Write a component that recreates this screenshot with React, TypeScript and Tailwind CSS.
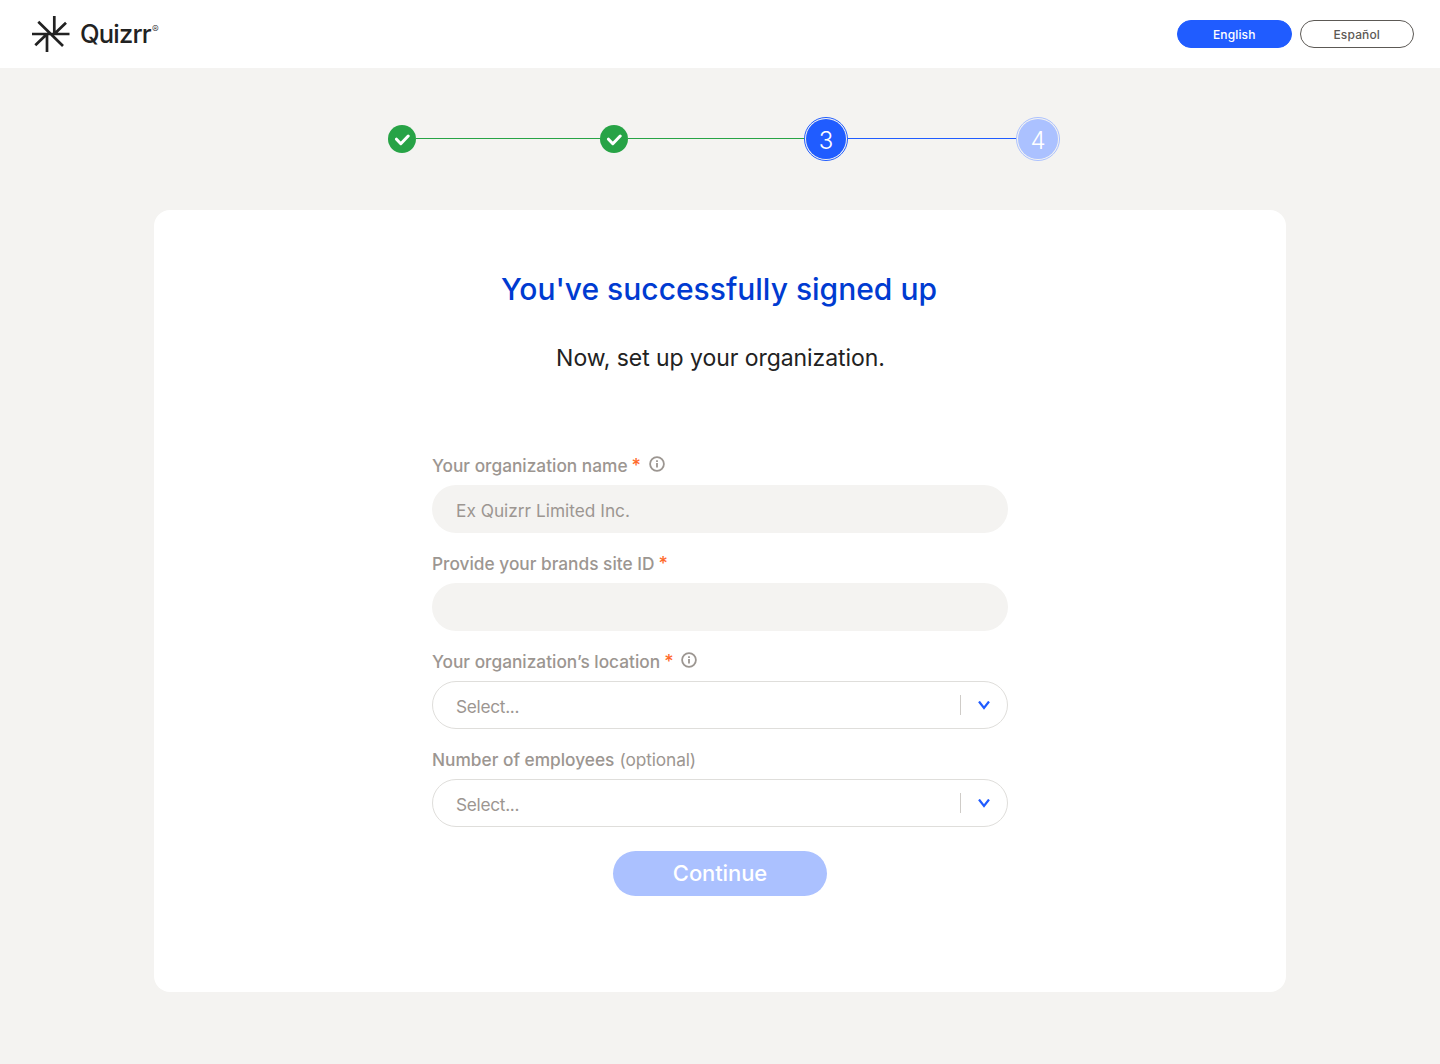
import { useState } from "react";
import clsx from "clsx";

const languages = ["English", "Español"];

function Logo() {
    return (
        <div className="flex items-center text-[#222222]">
            <svg width="38" height="36" viewBox="0 0 38 36" fill="none" stroke="currentColor" strokeWidth="2.7">
                <path d="M0 18H37.5M22.3 0V18M15 18V36M6.3 5.8L31 30M34 6.7L22.3 18M15 18L3.3 29.3" />
            </svg>
            <span className="ml-2.5 text-[25.5px] leading-9 font-medium tracking-[-0.8px]">Quizrr</span>
            <span className="ml-px mb-2.5 text-[10px] leading-none font-light">®</span>
        </div>
    );
}

function DoneStep() {
    return (
        <div className="flex size-7 items-center justify-center rounded-full bg-[#27a346]">
            <svg width="16" height="12" viewBox="0 0 16 12" fill="none" stroke="white" strokeWidth="3" strokeLinecap="round" strokeLinejoin="round" className="mt-0.5">
                <path d="M2.5 5.2L6.8 9.7L14.2 2" />
            </svg>
        </div>
    );
}

function NumberStep({ value, active }: { value: number; active?: boolean }) {
    return (
        <div className={clsx("size-11 rounded-full border p-px", active ? "border-[#205cff]" : "border-[#abc1ff]")}>
            <div className={clsx("flex size-full items-center justify-center rounded-full pt-1 text-2xl leading-none font-light text-white", active ? "bg-[#205cff]" : "bg-[#abc1ff]")}>
                {value}
            </div>
        </div>
    );
}

function InfoIcon() {
    return (
        <svg width="16" height="16" viewBox="0 0 16 16" fill="none" stroke="#9c9691" strokeWidth="1.8" className="mb-1 ml-[9px]">
            <circle cx="8" cy="8" r="6.9" />
            <path d="M8 7V11.5M8 4.3V6" />
        </svg>
    );
}

interface LabelProps {
    text: string;
    required?: boolean;
    info?: boolean;
    optional?: boolean;
}

function Label({ text, required, info, optional }: LabelProps) {
    return (
        <label className="flex h-6 items-center pt-0.5 text-[17.3px] leading-6 font-medium whitespace-pre text-[#9c9691]">
            <span>{text}</span>
            {required && <span className="ml-1 w-2 text-lg text-[#ff6a2b]">*</span>}
            {optional && <span className="ml-[5px] font-normal tracking-[-0.1px]">(optional)</span>}
            {info && <InfoIcon />}
        </label>
    );
}

function SelectBox() {
    return (
        <button type="button" className="mt-2 flex h-12 w-full items-center rounded-full border border-[#dfdedb] pl-[23px] text-left text-[17.3px] text-[#9c9691]">
            <span className="flex-1 pt-1 tracking-[-0.3px]">Select...</span>
            <span className="h-5 w-px bg-[#cfccc8]" />
            <svg width="12" height="9" viewBox="0 0 12 9" fill="none" stroke="#205cff" strokeWidth="2.2" className="mx-[17px]">
                <path d="M1 0.5L6 7L11 0.5" />
            </svg>
        </button>
    );
}

function App() {
    const [language, setLanguage] = useState("English");

    return (
        <div className="min-h-screen bg-[#f4f3f1] font-['Inter',sans-serif]">
            <header className="flex h-17 items-center justify-between bg-white pr-[26px] pl-8">
                <Logo />
                <div className="flex gap-2">
                    {languages.map((item) => (
                        <button
                            key={item}
                            onClick={() => setLanguage(item)}
                            className={clsx(
                                "h-7 w-[114.5px] rounded-full border pt-0.5 text-xs font-medium tracking-[0.15px]",
                                item === language ? "border-[#205cff] bg-[#205cff] text-white" : "border-[#5c5955] text-[#5c5955]"
                            )}
                        >
                            {item}
                        </button>
                    ))}
                </div>
            </header>

            <div className="mt-[49px] flex items-center justify-center pl-2">
                <DoneStep />
                <div className="mb-px h-px w-46 bg-[#27a346]" />
                <DoneStep />
                <div className="mb-px h-px w-44 bg-[#27a346]" />
                <NumberStep value={3} active />
                <div className="mb-px h-px w-42 bg-[#205cff]" />
                <NumberStep value={4} />
            </div>

            <main className="mx-auto mt-[49px] h-[782px] w-[1132px] rounded-2xl bg-white pt-[59px] text-center">
                <h1 className="pr-0.5 text-[30px] leading-10 font-medium text-[#003bd1]">You've successfully signed up</h1>
                <p className="mt-[29px] pl-px text-[23px] leading-10 tracking-[-0.06px] text-[#222222]">Now, set up your organization.</p>

                <form className="mx-auto mt-[75px] flex w-xl flex-col gap-[18px] text-left">
                    <div>
                        <Label text="Your organization name" required info />
                        <input
                            className="mt-2 block h-12 w-full rounded-full bg-[#f4f3f1] px-6 pt-0.5 text-[17.3px] text-[#222222] outline-none placeholder:text-[#9c9691]"
                            placeholder="Ex Quizrr Limited Inc."
                        />
                    </div>
                    <div>
                        <Label text="Provide your brands site ID" required />
                        <input className="mt-2 block h-12 w-full rounded-full bg-[#f4f3f1] px-6 pt-0.5 text-[17.3px] text-[#222222] outline-none" />
                    </div>
                    <div>
                        <Label text="Your organization’s location" required info />
                        <SelectBox />
                    </div>
                    <div>
                        <Label text="Number of employees" optional />
                        <SelectBox />
                    </div>
                    <button type="button" className="mx-auto mt-1.5 h-[45px] w-[214px] rounded-full bg-[#abc1ff] text-[22px] font-medium tracking-[-0.1px] text-white">
                        Continue
                    </button>
                </form>
            </main>
        </div>
    );
}

export default App;
